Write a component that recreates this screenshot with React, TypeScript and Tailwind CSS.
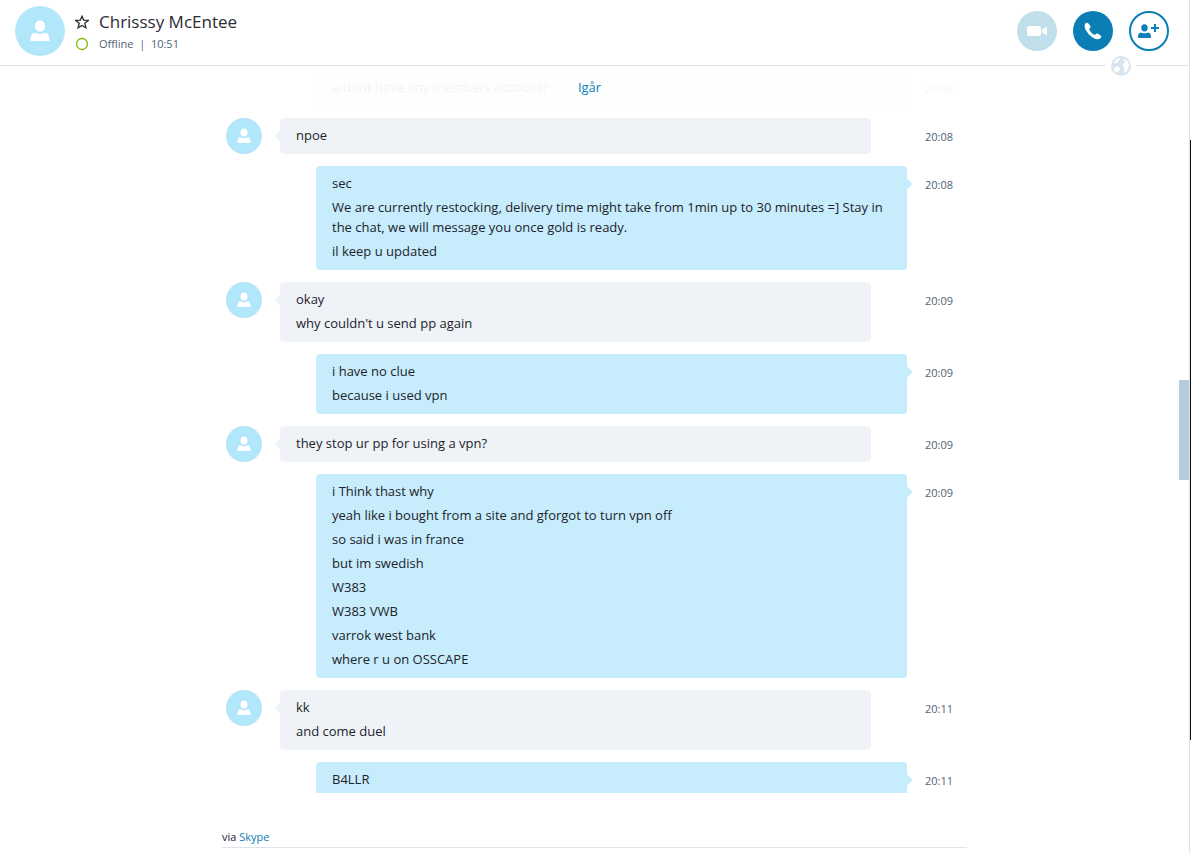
import React from "react";
import clsx from "clsx";

type Message = {
    from: "me" | "them";
    time: string;
    lines: string[];
    faded?: boolean;
};

const messages: Message[] = [
    { from: "me", time: "20:08", lines: ["u dont have any members account?"], faded: true },
    { from: "them", time: "20:08", lines: ["npoe"] },
    {
        from: "me",
        time: "20:08",
        lines: [
            "sec",
            "We are currently restocking, delivery time might take from 1min up to 30 minutes =] Stay in the chat, we will message you once gold is ready.",
            "il keep u updated",
        ],
    },
    { from: "them", time: "20:09", lines: ["okay", "why couldn't u send pp again"] },
    { from: "me", time: "20:09", lines: ["i have no clue", "because i used vpn"] },
    { from: "them", time: "20:09", lines: ["they stop ur pp for using a vpn?"] },
    {
        from: "me",
        time: "20:09",
        lines: [
            "i Think thast why",
            "yeah like i bought from a site and gforgot to turn vpn off",
            "so said i was in france",
            "but im swedish",
            "W383",
            "W383 VWB",
            "varrok west bank",
            "where r u on OSSCAPE",
        ],
    },
    { from: "them", time: "20:11", lines: ["kk", "and come duel"] },
    { from: "me", time: "20:11", lines: ["B4LLR"] },
];

const PersonIcon = ({ className }: { className?: string }) => (
    <svg viewBox="0 0 20 22" className={className} fill="currentColor" aria-hidden="true">
        <ellipse cx="10" cy="6" rx="5" ry="5.6" />
        <path d="M4.6 12.8 Q10 15.4 15.4 12.8 C18.2 13.2 19.5 16 19.5 20 Q19.5 21 18.5 21 H1.5 Q0.5 21 0.5 20 C0.5 16 1.8 13.2 4.6 12.8Z" />
    </svg>
);

const Tail = ({ className }: { className?: string }) => (
    <svg viewBox="0 0 5 14" className={clsx("absolute top-[11px] h-[14px] w-[5px]", className)} fill="currentColor" aria-hidden="true">
        <path d="M0 0 C0.2 2.6 2 3.6 4 5.2 Q6 6.9 4 8.8 C2 10.4 0.2 11.4 0 14Z" />
    </svg>
);

const MessageRow = ({ message }: { message: Message }) => {
    const mine = message.from === "me";

    return (
        <li className={clsx("flex items-start pl-1", message.faded && "opacity-5")}>
            <div className="w-9 shrink-0">
                {!mine && (
                    <div className="flex h-9 w-9 items-center justify-center rounded-full bg-[#b2e7fb] text-white">
                        <PersonIcon className="h-4 w-[14px]" />
                    </div>
                )}
            </div>
            <div
                className={clsx(
                    "relative flex min-w-0 flex-1 flex-col gap-1 rounded px-4 pt-[7px] pb-[9px] text-[13px] leading-5 text-[#22232b]",
                    mine ? "ml-[54px]" : "ml-[18px] mr-9 bg-[#eff3f8]",
                    mine && (message.faded ? "bg-[#e3f5fd]" : "bg-[#c7ecfc]")
                )}
            >
                <Tail className={mine ? "-right-[5px] text-[#c7ecfc]" : "-left-[5px] rotate-180 text-[#eff3f8]"} />
                {message.lines.map((line, index) => (
                    <p key={index}>{line}</p>
                ))}
            </div>
            <time className="ml-[18px] w-[42px] shrink-0 pt-[9px] text-[11px] leading-5 text-[#506375]">{message.time}</time>
        </li>
    );
};

const Header = () => (
    <header className="relative flex h-[66px] shrink-0 items-start justify-between border-b border-[#dae4ec] pl-[15px] pr-5">
        <div className="flex pt-[6px]">
            <div className="flex h-[50px] w-[50px] items-center justify-center rounded-full bg-[#b2e7fb] text-white">
                <PersonIcon className="h-[22px] w-5" />
            </div>
            <div className="ml-[10px] grid grid-cols-[14px_auto] items-center gap-x-[10px] self-start pt-1">
                <button type="button" aria-label="Add to favourites" className="text-[#2b2c33]">
                    <svg viewBox="0 0 16 16" className="-mt-px h-[14px] w-[14px]" fill="none" stroke="currentColor" strokeWidth="1.5" aria-hidden="true">
                        <path d="M8 1.4 L9.9 5.8 L15.2 6.2 L11.2 9.5 L12.5 14.6 L8 11.9 L3.5 14.6 L4.8 9.5 L0.8 6.2 L6.1 5.8Z" />
                    </svg>
                </button>
                <h1 className="text-[17px] leading-6 text-[#2b2c33]">Chrisssy McEntee</h1>
                <svg viewBox="0 0 14 14" className="-mt-px h-[14px] w-[14px]" fill="none" stroke="#7fba00" strokeWidth="1.3" aria-hidden="true">
                    <circle cx="7" cy="7" r="5.5" />
                </svg>
                <p className="text-[11px] leading-5 text-[#506375]">Offline&nbsp; |&nbsp; 10:51</p>
            </div>
        </div>
        <div className="flex gap-4 pt-[11px]">
            <button type="button" aria-label="Video call" className="flex h-10 w-10 items-center justify-center rounded-full bg-[#c1deeb] text-white">
                <svg viewBox="0 0 20 10" className="h-[10px] w-5" fill="currentColor" aria-hidden="true">
                    <rect width="14" height="10" rx="2" />
                    <path d="M15 3.8 L18.8 1 Q20 0.6 20 1.6 V8.4 Q20 9.4 18.8 9 L15 6.2Z" />
                </svg>
            </button>
            <button type="button" aria-label="Call" className="flex h-10 w-10 items-center justify-center rounded-full bg-[#0a7eb5] text-white">
                <svg viewBox="0 0 18 18" className="h-[18px] w-[18px]" fill="currentColor" aria-hidden="true">
                    <path d="M1.2 1.8 Q3 0 4.2 1.2 L6.4 4 Q7 5 6 5.9 Q4.8 7 5.6 8.2 Q7.2 11 9.8 12.4 Q11 13.2 12.1 12 Q13 11 14 11.6 L16.8 13.8 Q18 15 16.2 16.6 Q13.6 18.4 9.4 16 Q4.4 13 2 8.6 Q-0.4 4.2 1.2 1.8Z" />
                </svg>
            </button>
            <button type="button" aria-label="Add people" className="flex h-10 w-10 items-center justify-center rounded-full border-2 border-[#0a7eb5] text-[#0a7eb5]">
                <svg viewBox="0 0 22 14" className="h-[14px] w-[22px]" fill="currentColor" aria-hidden="true">
                    <ellipse cx="6.5" cy="3.8" rx="3.2" ry="3.6" />
                    <path d="M3 8.4 Q6.5 10.2 10 8.4 Q13 8.8 13 13 Q13 14 12 14 H1 Q0 14 0 13 Q0 8.8 3 8.4Z" />
                    <path d="M16 0 H18 V3 H21 V5 H18 V8 H16 V5 H13 V3 H16Z" />
                </svg>
            </button>
        </div>
        <div className="absolute -bottom-[11px] right-[53px] flex w-[30px] justify-center bg-white text-[#d8e4ee]">
            <svg viewBox="0 0 20 20" className="h-5 w-5" aria-hidden="true">
                <circle cx="10" cy="10" r="10" fill="currentColor" />
                <path d="M2.6 7.4 Q3.6 4 6.4 2.8 Q8.4 2 9.4 2.6 Q8.8 4 7.6 4.4 Q7.6 6 6.2 6.6 Q4 8.4 2.6 7.4Z" fill="white" />
                <path d="M2.6 13.2 Q3.4 10.4 5.8 10.6 Q8.4 11.2 9.2 12.6 Q8.6 15 6.8 15.4 Q6.6 17 5.6 16.8 Q3.4 15.6 2.6 13.2Z" fill="white" />
                <path d="M13 2.8 Q17.4 4.4 18 9 Q18 13.6 14.6 16.8 Q12.8 17 12.8 14.6 Q13.6 12.4 12.6 11 Q11.6 9.4 12.4 7.8 Q13.8 6.8 13.8 5.4 Q12.6 4 13 2.8Z" fill="white" />
            </svg>
        </div>
    </header>
);

const App = () => {
    return (
        <div className="flex h-screen overflow-hidden bg-white font-['Open_Sans',sans-serif]">
            <div className="relative flex min-w-0 flex-1 flex-col border-r border-[#dae4ec]">
                <Header />
                <main className="relative mt-[11px] min-h-0 flex-1 overflow-hidden">
                    <p className="absolute inset-x-0 top-0 z-10 pr-[10px] text-center text-[13px] leading-5 text-[#0a7eb5]">Igår</p>
                    <ul className="mx-auto -mt-[7px] flex max-w-[745px] flex-col gap-3">
                        {messages.map((message, index) => (
                            <MessageRow key={index} message={message} />
                        ))}
                    </ul>
                </main>
                <footer className="h-[60px] shrink-0 pt-[34px]">
                    <div className="mx-auto h-[21px] max-w-[745px] border-b border-[#dae4ec] text-[11px] leading-5 text-[#22232b]">
                        via{" "}
                        <a href="#" className="text-[#0a7eb5]">
                            Skype
                        </a>
                    </div>
                </footer>
                <div className="absolute right-0 top-[380px] h-[100px] w-[10px] bg-[#b7cbda]" />
            </div>
            <div className="mt-[140px] h-[600px] w-px shrink-0 bg-[#0b0f12]" />
        </div>
    );
};

export default App;
